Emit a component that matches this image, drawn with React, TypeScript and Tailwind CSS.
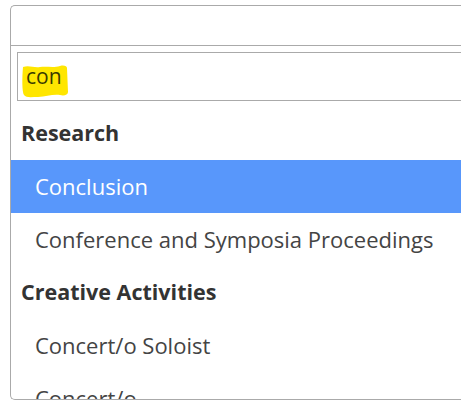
import { useState } from "react";

type Row = { label: string; group?: boolean };

const rows: Row[] = [
  { label: "Research", group: true },
  { label: "Conclusion" },
  { label: "Conference and Symposia Proceedings" },
  { label: "Creative Activities", group: true },
  { label: "Concert/o Soloist" },
  { label: "Concert/o" },
];

export default function App() {
  const [query, setQuery] = useState("con");
  const active = "Conclusion";

  return (
    <div className="h-[402px] w-[461px] overflow-hidden bg-white pl-[10px] pt-[5px] font-['Open_Sans',sans-serif]">
      <div className="flex h-[395px] flex-col overflow-hidden rounded-l-[5px] border border-r-0 border-[#aaaaaa]">
        {/* selection box */}
        <div className="h-[40px] shrink-0 border-b border-[#aaaaaa]" />

        {/* search field */}
        <div className="shrink-0 py-[6px] pl-[6px]">
          <div className="relative flex h-[49px] items-center border border-r-0 border-[#aaaaaa] pl-[8px]">
            {/* marker stroke behind the typed text */}
            <svg
              className="absolute left-[2px] top-[11px]"
              width="50"
              height="36"
              viewBox="0 0 50 36"
            >
              <path
                d="M3 3 C9 1 14 4 20 3 C27 2 33 4 40 2 C44 1 47 2 47 4 L48 28 C48 31 44 32 40 31 C32 30 26 33 18 33 C11 33 6 34 4 31 C2 28 2 14 3 3 Z"
                fill="#ffe600"
              />
            </svg>
            <input
              value={query}
              onChange={(e) => setQuery(e.target.value)}
              className="relative w-full bg-transparent text-[21px] text-[#3a3a00] outline-none"
            />
          </div>
        </div>

        {/* results */}
        <ul className="flex-1">
          {rows.map((r) =>
            r.group ? (
              <li
                key={r.label}
                className="flex h-[53px] items-center pl-[10px] text-[21.5px] font-bold text-[#333333]"
              >
                {r.label}
              </li>
            ) : (
              <li
                key={r.label}
                className={
                  r.label === active
                    ? "flex h-[53px] items-center bg-[#5897fb] pl-[24px] text-[22px] text-white"
                    : "flex h-[53px] items-center pl-[24px] text-[22px] text-[#444444]"
                }
              >
                {r.label}
              </li>
            )
          )}
        </ul>
      </div>
    </div>
  );
}
